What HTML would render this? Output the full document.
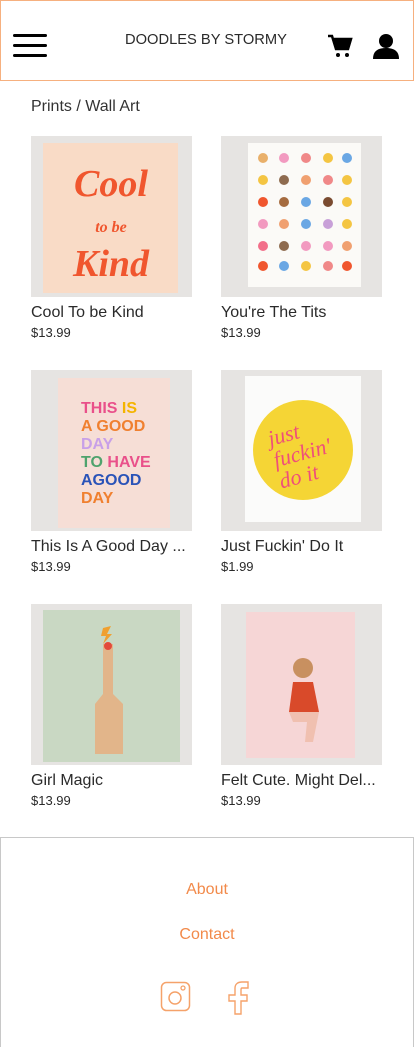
<!DOCTYPE html>
<html><head><meta charset="utf-8"><style>
*{margin:0;padding:0;box-sizing:border-box}
body{width:414px;height:1047px;background:#fff;font-family:"Liberation Sans",sans-serif;position:relative;overflow:hidden;color:#222}
.hdr{position:absolute;left:0;top:0;width:414px;height:81px;border:1px solid #f6b07f}
.abs{position:absolute}
.img{position:absolute;width:161px;height:161px;background:#e6e4e2}
.p{position:absolute}
.t{position:absolute;font-size:16px;color:#2a2a2a}
.pr{position:absolute;font-size:13px;color:#2a2a2a}
.foot{position:absolute;left:0;top:837px;width:414px;height:210px;border:1px solid #c8c8c8;border-bottom:none}
.fl{position:absolute;width:414px;text-align:center;color:#f28a4a;font-size:16px}
</style></head><body>
<div class="hdr">
 <div class="abs" style="left:12px;top:33px;width:34px;height:3px;background:#000;border-radius:2px"></div>
 <div class="abs" style="left:12px;top:43px;width:34px;height:3px;background:#000;border-radius:2px"></div>
 <div class="abs" style="left:12px;top:53px;width:34px;height:3px;background:#000;border-radius:2px"></div>
 <div class="abs" style="left:124px;top:31px;font-size:14.7px;color:#2a2a2a">DOODLES BY STORMY</div>
 <svg class="abs" style="left:327px;top:33px" width="25" height="25" viewBox="0 0 25 25"><path d="M0 2h4l4 13h12l3-10H6" fill="none" stroke="#000" stroke-width="2.5"/><path d="M6 5h17l-3 10H8z" fill="#000"/><circle cx="10" cy="21" r="2" fill="#000"/><circle cx="19" cy="21" r="2" fill="#000"/></svg>
 <svg class="abs" style="left:372px;top:33px" width="26" height="25" viewBox="0 0 26 25"><circle cx="13" cy="7" r="7" fill="#000"/><path d="M0 25c0-8 5-11 13-11s13 3 13 11z" fill="#000"/></svg>
</div>
<div class="abs" style="left:31px;top:98px;font-size:16px;color:#333">Prints / Wall Art</div>

<div class="img" style="left:31px;top:136px"><div class="p" style="left:12px;top:7px;width:135px;height:150px;background:#f9dbc6"></div>
<div class="p" style="left:35px;top:30px;font:bold italic 38px 'Liberation Serif',serif;color:#f0562e;line-height:36px;text-align:center;width:90px">Cool<br><span style="font-size:16px">to be</span><br>Kind</div></div>
<div class="img" style="left:221px;top:136px"><div class="p" style="left:27px;top:7px;width:113px;height:144px;background:#fbfaf7"></div>
<svg class="p" style="left:30px;top:12px" width="108" height="140"><g>
<circle cx="12" cy="10" r="5" fill="#e9b06a"/><circle cx="33" cy="10" r="5" fill="#f29ac0"/><circle cx="55" cy="10" r="5" fill="#f08888"/><circle cx="77" cy="10" r="5" fill="#f4c542"/><circle cx="96" cy="10" r="5" fill="#6aa7e4"/>
<circle cx="12" cy="32" r="5" fill="#f4c542"/><circle cx="33" cy="32" r="5" fill="#8e6b4f"/><circle cx="55" cy="32" r="5" fill="#f0a070"/><circle cx="77" cy="32" r="5" fill="#f08888"/><circle cx="96" cy="32" r="5" fill="#f4c542"/>
<circle cx="12" cy="54" r="5" fill="#f0562e"/><circle cx="33" cy="54" r="5" fill="#a56b3f"/><circle cx="55" cy="54" r="5" fill="#6aa7e4"/><circle cx="77" cy="54" r="5" fill="#7a4b30"/><circle cx="96" cy="54" r="5" fill="#f4c542"/>
<circle cx="12" cy="76" r="5" fill="#f29ac0"/><circle cx="33" cy="76" r="5" fill="#f0a070"/><circle cx="55" cy="76" r="5" fill="#6aa7e4"/><circle cx="77" cy="76" r="5" fill="#c8a0d8"/><circle cx="96" cy="76" r="5" fill="#f4c542"/>
<circle cx="12" cy="98" r="5" fill="#f26f8a"/><circle cx="33" cy="98" r="5" fill="#8e6b4f"/><circle cx="55" cy="98" r="5" fill="#f29ac0"/><circle cx="77" cy="98" r="5" fill="#f29ac0"/><circle cx="96" cy="98" r="5" fill="#f0a070"/>
<circle cx="12" cy="118" r="5" fill="#f0562e"/><circle cx="33" cy="118" r="5" fill="#6aa7e4"/><circle cx="55" cy="118" r="5" fill="#f4c542"/><circle cx="77" cy="118" r="5" fill="#f08888"/><circle cx="96" cy="118" r="5" fill="#f0562e"/>
</g></svg></div>
<div class="t" style="left:31px;top:304px">Cool To be Kind</div><div class="pr" style="left:31px;top:325px">$13.99</div>
<div class="t" style="left:221px;top:304px">You're The Tits</div><div class="pr" style="left:221px;top:325px">$13.99</div>

<div class="img" style="left:31px;top:370px"><div class="p" style="left:27px;top:8px;width:112px;height:150px;background:#f6ded6"></div>
<div class="p" style="left:50px;top:30px;font:bold 16px/18px 'Liberation Sans',sans-serif;color:#e9508a;width:80px"><span style="color:#e9508a">THIS</span> <span style="color:#f4b400">IS</span><br><span style="color:#f08030">A GOOD</span><br><span style="color:#c8a0e8">DAY</span><br><span style="color:#4fa36d">TO</span> <span style="color:#e9508a">HAVE</span><br><span style="color:#2a53b8">AGOOD</span><br><span style="color:#f08030">DAY</span></div></div>
<div class="img" style="left:221px;top:370px"><div class="p" style="left:24px;top:6px;width:116px;height:146px;background:#fbfbfa"></div>
<div class="p" style="left:32px;top:30px;width:100px;height:100px;border-radius:50%;background:#f5d535"></div>
<div class="p" style="left:52px;top:50px;font:italic 22px/22px 'Liberation Serif',serif;color:#ef4f7a;transform:rotate(-15deg)">just<br>fuckin'<br>do it</div></div>
<div class="t" style="left:31px;top:538px">This Is A Good Day ...</div><div class="pr" style="left:31px;top:559px">$13.99</div>
<div class="t" style="left:221px;top:538px">Just Fuckin' Do It</div><div class="pr" style="left:221px;top:559px">$1.99</div>

<div class="img" style="left:31px;top:604px"><div class="p" style="left:12px;top:6px;width:137px;height:152px;background:#c9d8c3"></div>
<svg class="p" style="left:50px;top:20px" width="60" height="130"><path d="M22 20h10v50l10 10v50H14V80l8-10z" fill="#e2b58a"/><circle cx="27" cy="22" r="4" fill="#e34a3a"/><path d="M22 4l8 -2-4 8 5 0-9 10 3-8h-5z" fill="#f0a030"/></svg></div>
<div class="img" style="left:221px;top:604px"><div class="p" style="left:25px;top:8px;width:109px;height:146px;background:#f6d6d6"></div>
<svg class="p" style="left:60px;top:50px" width="50" height="90"><circle cx="22" cy="14" r="10" fill="#c89060"/><path d="M12 28h20l6 30H8z" fill="#d94a2a"/><path d="M8 58h30l-6 30h-8l2-20h-14z" fill="#f0c0b0"/></svg></div>
<div class="t" style="left:31px;top:772px">Girl Magic</div><div class="pr" style="left:31px;top:793px">$13.99</div>
<div class="t" style="left:221px;top:772px">Felt Cute. Might Del...</div><div class="pr" style="left:221px;top:793px">$13.99</div>

<div class="foot">
 <div class="fl" style="top:43px;left:-1px">About</div>
 <div class="fl" style="top:88px;left:-1px">Contact</div>
 <svg class="abs" style="left:159px;top:143px" width="32" height="32"><rect x="1.5" y="1.5" width="28" height="28" rx="5" fill="none" stroke="#f5a26a" stroke-width="1.5"/><circle cx="15" cy="17" r="6" fill="none" stroke="#f5a26a" stroke-width="1.5"/><circle cx="23" cy="7" r="2" fill="none" stroke="#f5a26a" stroke-width="1.3"/></svg>
 <svg class="abs" style="left:225px;top:143px" width="26" height="34"><path d="M9 33V20H3v-6h6V7c0-4 3-6 7-6h6v6h-6c-1 0-1 1-1 2v5h6v6h-6v13z" fill="none" stroke="#f5a26a" stroke-width="1.4"/></svg>
</div>
</body></html>
